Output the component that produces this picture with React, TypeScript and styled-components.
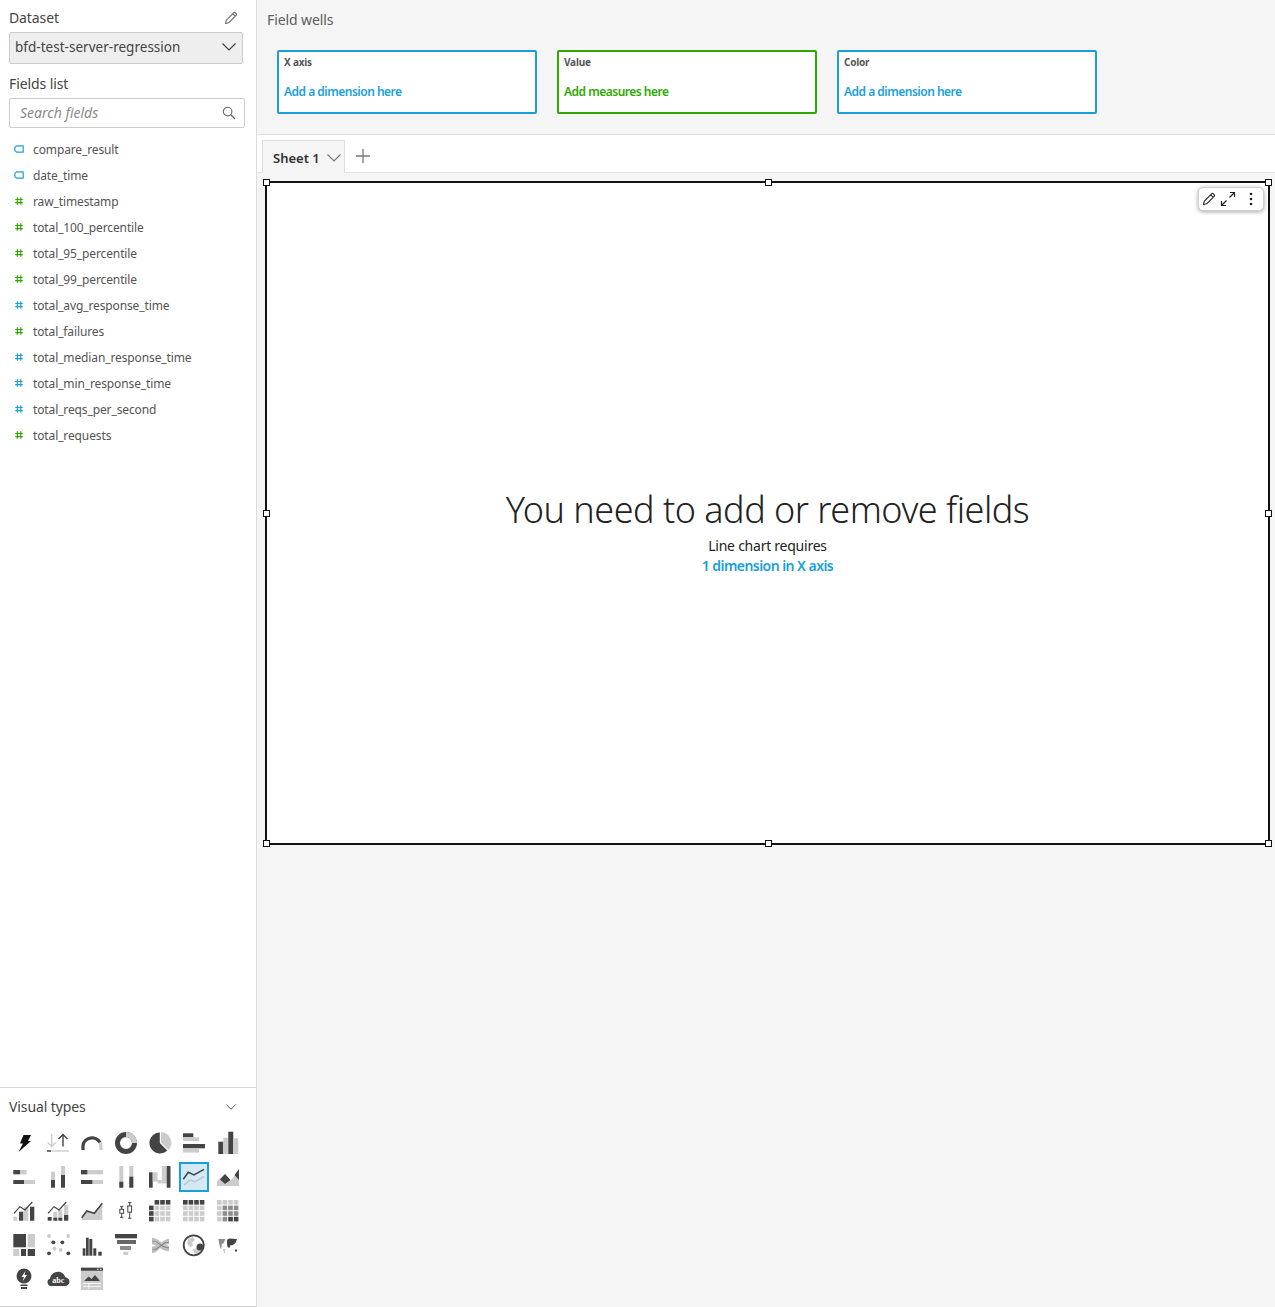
import React from "react";
import styled, { createGlobalStyle } from "styled-components";

const FONT = `"Noto Sans", "Open Sans", "Liberation Sans", sans-serif`;
const D = "#444444";
const M = "#8c8c8c";
const L = "#cccccc";
const BLUE = "#1b9fd9";
const GREEN = "#2fa800";

const Global = createGlobalStyle`
  html, body { margin: 0; padding: 0; background: #f5f5f5; }
  body { font-family: ${FONT}; color: #444; }
  * { box-sizing: border-box; }
`;

const Page = styled.div`
  display: flex;
  width: 1275px;
  height: 1307px;
  overflow: hidden;
`;

const Sidebar = styled.aside`
  flex: 0 0 257px;
  display: flex;
  flex-direction: column;
  background: #fff;
  border-right: 1px solid #dcdcdc;
`;

const SidebarTop = styled.div`
  flex: 1;
  padding: 8px 11px 0 9px;
`;

const LabelRow = styled.div`
  display: flex;
  align-items: center;
  justify-content: space-between;
  height: 20px;
  padding-right: 7px;
`;

const PanelLabel = styled.div`
  font-size: 14px;
  line-height: 20px;
  color: #444;
  letter-spacing: -0.1px;
`;

const DatasetSelect = styled.div`
  display: flex;
  align-items: center;
  justify-content: space-between;
  width: 234px;
  height: 32px;
  margin-top: 4px;
  padding: 0 5px 3px 5px;
  background: #eeeeee;
  border: 1px solid #cccccc;
  border-radius: 2px;
  font-size: 13.5px;
  color: #444;
  letter-spacing: 0.02px;
`;

const FieldsLabel = styled(PanelLabel)`
  margin-top: 10px;
`;

const SearchBox = styled.div`
  display: flex;
  align-items: center;
  justify-content: space-between;
  width: 236px;
  height: 30px;
  margin-top: 4px;
  padding: 0 8px 1px 10px;
  background: #fff;
  border: 1px solid #cccccc;
  border-radius: 2px;
  font-size: 14px;
  font-style: italic;
  color: #8a8a8a;
`;

const FieldList = styled.ul`
  list-style: none;
  margin: 8px 0 0;
  padding: 0;
`;

const FieldRow = styled.li`
  display: flex;
  align-items: center;
  height: 26px;
  padding-left: 5px;
  font-size: 12px;
  color: #545454;
  letter-spacing: -0.12px;
`;

const FieldGlyph = styled.span`
  display: flex;
  width: 19px;
  flex: none;
`;

const VisualPanel = styled.section`
  flex: 0 0 220px;
  border-top: 1px solid #d5d5d5;
  border-bottom: 1px solid #d5d5d5;
  padding: 9px 0 0 8px;
`;

const VisualHead = styled(LabelRow)`
  padding: 0 19px 0 1px;
`;

const VisualGrid = styled.div`
  display: grid;
  grid-template-columns: repeat(7, 34px);
  grid-auto-rows: 34px;
  margin-top: 9px;
`;

const VisualCell = styled.div<{ $selected?: boolean }>`
  position: relative;
  width: 34px;
  height: 34px;
  ${(p) =>
    p.$selected &&
    `&::before {
      content: "";
      position: absolute;
      inset: 2px 3px 2px 1px;
      background: #d3e9f6;
      border: 2px solid ${BLUE};
    }`}
  svg { position: relative; display: block; }
`;

const Main = styled.main`
  flex: 1;
  display: flex;
  flex-direction: column;
  min-width: 0;
`;

const Wells = styled.header`
  flex: 0 0 135px;
  padding: 10px 0 0 10px;
  background: #f5f5f5;
  border-bottom: 1px solid #dcdcdc;
`;

const WellsTitle = styled.div`
  font-size: 14px;
  line-height: 20px;
  color: #5c5c5c;
  letter-spacing: -0.1px;
`;

const WellRow = styled.div`
  display: flex;
  gap: 20px;
  margin: 20px 0 0 10px;
`;

const Well = styled.div<{ $color: string }>`
  width: 260px;
  height: 64px;
  padding: 3px 5px;
  background: #fff;
  border: 2px solid ${(p) => p.$color};
  border-radius: 2px;
`;

const WellLabel = styled.div`
  font-size: 10px;
  line-height: 14px;
  font-weight: 700;
  color: #555;
  letter-spacing: -0.2px;
`;

const WellHint = styled.div<{ $color: string }>`
  margin-top: 15px;
  font-size: 12px;
  line-height: 16px;
  font-weight: 600;
  color: ${(p) => p.$color};
  letter-spacing: -0.5px;
`;

const TabBar = styled.nav`
  flex: 0 0 38px;
  display: flex;
  align-items: flex-end;
  padding-left: 5px;
  background: #fff;
  border-bottom: 1px solid #e2e2e2;
`;

const Tab = styled.div`
  display: flex;
  align-items: center;
  justify-content: space-between;
  width: 83px;
  height: 33px;
  margin-bottom: -1px;
  padding: 1px 2px 0 10px;
  background: #f5f5f5;
  border: 1px solid #dedede;
  border-bottom: 0;
  font-size: 13px;
  font-weight: 600;
  color: #333;
`;

const AddTab = styled.div`
  display: flex;
  margin: 0 0 9px 11px;
`;

const Canvas = styled.div`
  flex: 1;
  padding: 8px 5px 0 8px;
  background: #f5f5f5;
`;

const VisualFrame = styled.div`
  position: relative;
  width: 1005px;
  height: 664px;
  padding-top: 303px;
  background: #fff;
  border: 2px solid #111;
  text-align: center;
`;

const Handle = styled.span<{ $x: "l" | "c" | "r"; $y: "t" | "c" | "b" }>`
  position: absolute;
  width: 7px;
  height: 7px;
  background: #fff;
  border: 1.5px solid #111;
  left: ${(p) => (p.$x === "l" ? "-4px" : p.$x === "c" ? "calc(50% - 3px)" : "auto")};
  right: ${(p) => (p.$x === "r" ? "-4px" : "auto")};
  top: ${(p) => (p.$y === "t" ? "-4px" : p.$y === "c" ? "calc(50% - 3px)" : "auto")};
  bottom: ${(p) => (p.$y === "b" ? "-4px" : "auto")};
`;

const FrameTools = styled.div`
  position: absolute;
  top: 4px;
  right: 4px;
  display: flex;
  align-items: center;
  gap: 4px;
  width: 66px;
  height: 24px;
  padding-left: 3px;
  background: #fff;
  border: 1px solid #cfcfcf;
  border-radius: 5px;
  box-shadow: 0 1px 4px rgba(0, 0, 0, 0.35);
`;

const Message = styled.h2`
  margin: 0;
  font-size: 36px;
  line-height: 48px;
  font-weight: 300;
  color: #222;
  letter-spacing: -0.5px;
`;

const Requires = styled.div`
  margin-top: 2px;
  font-size: 14px;
  line-height: 20px;
  color: #222;
  letter-spacing: -0.25px;
`;

const Requirement = styled.div`
  font-size: 14px;
  line-height: 20px;
  font-weight: 600;
  color: ${BLUE};
  letter-spacing: -0.55px;
`;

const Chevron = ({ size = 16, color = "#444" }: { size?: number; color?: string }) => (
  <svg width={size} height={size} viewBox="0 0 16 16" fill="none">
    <path d="M1.5 4.5 8 11l6.5-6.5" stroke={color} strokeWidth="1.2" />
  </svg>
);

const Pencil = ({ color = "#666" }: { color?: string }) => (
  <svg width="14" height="14" viewBox="0 0 14 14" fill="none">
    <path d="M1.5 12.5l.7-3.2L9.8 1.7a1 1 0 0 1 1.4 0l1.1 1.1a1 1 0 0 1 0 1.4L4.7 11.8z M8.8 2.8l2.4 2.4" stroke={color} strokeWidth="1.1" strokeLinejoin="round" />
  </svg>
);

const Search = () => (
  <svg width="14" height="14" viewBox="0 0 14 14" fill="none">
    <circle cx="5.6" cy="5.6" r="4.3" stroke="#666" strokeWidth="1.1" />
    <path d="M8.8 8.8l4.2 4.2" stroke="#666" strokeWidth="1.3" />
  </svg>
);

const Tag = () => (
  <svg width="10" height="8" viewBox="0 0 10 8" fill="none">
    <path d="M2.8.8h6.4v6.4H2.8L.8 5.6V2.4z" stroke={BLUE} strokeWidth="1.2" strokeLinejoin="round" />
  </svg>
);

const Hash = ({ color }: { color: string }) => (
  <svg width="10" height="10" viewBox="0 0 10 10" fill="none">
    <path d="M3.4 1.2v7.6M6.8 1.2v7.6M1.2 3.5h7.6M1.2 6.6h7.6" stroke={color} strokeWidth="1.2" />
  </svg>
);

const R = ({ x, y, w, h, c = D }: { x: number; y: number; w: number; h: number; c?: string }) => (
  <rect x={x} y={y} width={w} height={h} fill={c} />
);

const Dot = ({ x, y, c }: { x: number; y: number; c: string }) => <circle cx={x} cy={y} r="1.9" fill={c} />;

const Matrix = ({ cells }: { cells: string[] }) => (
  <>
    {cells.flatMap((row, r) =>
      row.split("").map((k, c) =>
        k === "." ? null : (
          <R key={`${r}-${c}`} x={5 + c * 5.6} y={6 + r * 5.6} w={4.6} h={4.6} c={k === "d" ? D : k === "m" ? M : L} />
        )
      )
    )}
  </>
);

const ICONS: React.ReactNode[] = [
  <path d="M15.5 9h7.5l-3 6h3L10.5 26l4.5-8.5h-3z" fill="#111" />,
  <>
    <path d="M9.7 8v12.5M5.7 16.5l4 4 4-4" stroke={L} strokeWidth="1.4" fill="none" />
    <path d="M21 20.5V8.5M16.5 13l4.5-4.5 4.5 4.5" stroke={D} strokeWidth="1.4" fill="none" />
    <R x={5} y={24.3} w={22} h={1.4} c={L} />
    <R x={5} y={24.3} w={4} h={1.4} />
  </>,
  <>
    <path d="M7 24v-4a9 8.5 0 0 1 17-3.5" stroke={D} strokeWidth="3.2" fill="none" />
    <path d="M24 16.5a9 9 0 0 1 1 3.5v4" stroke={L} strokeWidth="3.2" fill="none" />
  </>,
  <>
    <circle cx="16" cy="17" r="8.5" stroke={D} strokeWidth="5" fill="none" />
    <path d="M16 8.5a8.5 8.5 0 0 1 8.5 8.5" stroke={L} strokeWidth="5" fill="none" />
  </>,
  <>
    <path d="M15.8 17V6.5a10.5 10.5 0 1 0 7.5 18z" fill={D} />
    <path d="M17 6.3a10.5 10.5 0 0 1 7.5 17.7L17 16.5z" fill={L} />
  </>,
  <>
    <R x={5} y={7.3} w={10.3} h={4} />
    <R x={5} y={11.3} w={16} h={3.7} c={L} />
    <R x={5} y={18} w={22} h={4.3} />
    <R x={5} y={22.3} w={16} h={4.3} c={L} />
  </>,
  <>
    <R x={6.3} y={15.7} w={5} h={12.3} />
    <R x={11.3} y={11.7} w={5} h={16.3} c={L} />
    <R x={16.3} y={5.7} w={5} h={22.3} />
    <R x={21.3} y={12.3} w={5} h={15.7} c={L} />
  </>,
  <>
    <R x={5.3} y={10} w={6.7} h={4.3} />
    <R x={12} y={10} w={6.7} h={4.3} c={L} />
    <R x={5.3} y={20} w={11} h={4} />
    <R x={16.3} y={20} w={10.7} h={4} c={L} />
  </>,
  <>
    <R x={9} y={11.7} w={4} h={8.3} c={L} />
    <R x={9} y={20} w={4} h={7.7} />
    <R x={19} y={6} w={4} h={9} c={L} />
    <R x={19} y={15} w={4} h={12.7} />
  </>,
  <>
    <R x={5} y={10} w={22} h={4.3} c={L} />
    <R x={5} y={10} w={6.3} h={4.3} />
    <R x={5} y={20} w={22} h={4} c={L} />
    <R x={5} y={20} w={11.3} h={4} />
  </>,
  <>
    <R x={9.3} y={6} w={4} h={21.7} c={L} />
    <R x={9.3} y={21.7} w={4} h={6} />
    <R x={19.3} y={6} w={4} h={21.7} c={L} />
    <R x={19.3} y={16.7} w={4} h={11} />
  </>,
  <>
    <R x={5} y={12.3} w={3.7} h={15.4} />
    <R x={8.7} y={12.3} w={4.8} h={9.4} c={L} />
    <R x={13.5} y={20} w={4.3} h={3.5} c={L} />
    <R x={17.8} y={6} w={4.9} h={17.5} c={L} />
    <R x={22.7} y={6} w={3.8} h={21.7} />
  </>,
  <>
    <path d="M6 25l6-5 5 1.7 9-5" stroke="#c4c4c4" strokeWidth="1.4" fill="none" />
    <path d="M5.3 19.3l5-7 5.7 2.7 10-5.700" stroke={D} strokeWidth="1.5" fill="none" />
  </>,
  <>
    <path d="M5 21l8-7 6 6.5 8-11.5v17H5z" fill={L} />
    <path d="M13 14l5.5 6-5.5 4-5-4.5zM27 9l-4.5 6 4.5 5z" fill={D} />
  </>,
  <>
    <R x={5.3} y={22.7} w={4} h={4} c={L} />
    <R x={11} y={17.7} w={4.3} h={9} />
    <R x={16} y={12.7} w={4.3} h={14} c={L} />
    <R x={22} y={12.7} w={4.3} h={14} />
    <path d="M6 19.3l6-6.6 5 3.3 7.3-8" stroke={D} strokeWidth="1.2" fill="none" />
  </>,
  <>
    <R x={5.7} y={23} w={4} h={3.7} />
    <R x={11.3} y={18} w={4} h={5.7} c={L} />
    <R x={11.3} y={23.7} w={4} h={3} />
    <R x={16.3} y={16} w={4} h={7.7} c={L} />
    <R x={16.3} y={23.7} w={4} h={3} />
    <R x={22} y={11} w={4.3} h={10} c={L} />
    <R x={22} y={21} w={4.3} h={5.7} />
    <path d="M6 19.3l6-6.6 5 3.3 7.3-8" stroke={D} strokeWidth="1.2" fill="none" />
  </>,
  <>
    <path d="M5.7 26v-2.3l5-6.7 7.6 2.3 8-10V26z" fill={L} />
    <path d="M5.7 23.7l5-6.7 7.6 2.3 8-10" stroke={D} strokeWidth="1.6" fill="none" />
  </>,
  <>
    <path d="M11.7 12.7v10.6M19.7 8.7v15.6M10 12.7h3.4M10 23.3h3.4M18 8.7h3.4M18 24.3h3.4" stroke={D} strokeWidth="1" />
    <rect x="9.8" y="15.3" width="3.8" height="4" fill="#fff" stroke={D} strokeWidth="1" />
    <rect x="17.8" y="11.9" width="3.8" height="6.2" fill="#fff" stroke={D} strokeWidth="1" />
  </>,
  <Matrix cells={[".ddd", "dlll", "dlll", "dlll"]} />,
  <Matrix cells={["dddd", "llll", "llll", "llll"]} />,
  <Matrix cells={["llll", "lmmm", "lmmm", "lmdd"]} />,
  <>
    <R x={5.3} y={6} w={12.7} h={13.3} />
    <R x={19.7} y={6} w={7.3} h={13.3} c={L} />
    <R x={5.3} y={21} w={6} h={7} c={L} />
    <R x={13} y={21} w={5} h={7} />
    <R x={19.7} y={21} w={7.3} h={7} />
  </>,
  <>
    <Dot x={7} y={8} c={L} />
    <Dot x={26.3} y={8} c={L} />
    <Dot x={11.3} y={14.3} c={D} />
    <Dot x={20.3} y={14.3} c={D} />
    <Dot x={12.5} y={20.5} c={L} />
    <Dot x={18.7} y={22} c={L} />
    <Dot x={7} y={25.3} c={D} />
    <Dot x={26.3} y={25.3} c={D} />
  </>,
  <>
    <R x={6.7} y={20.3} w={2.7} h={7.4} />
    <R x={10} y={9.7} w={2.7} h={18} />
    <R x={13.3} y={11} w={3} h={16.7} />
    <R x={17.3} y={20.3} w={3} h={7.4} />
    <R x={22.3} y={23.7} w={3.4} h={4} />
  </>,
  <>
    <R x={5} y={6} w={22} h={4.3} />
    <R x={7} y={12} w={19} h={4} c="#666" />
    <R x={10} y={18} w={11} h={4} c={M} />
    <R x={13.3} y={23.7} w={5} h={3.3} c={L} />
  </>,
  <>
    <path d="M8 11c6 0 10 8 17 8M8 15c6 0 10 7 17 7M8 24c7 0 9-12 17-12M8 20c7 0 10-5 17-5" stroke="#bdbdbd" strokeWidth="2.6" fill="none" />
    <path d="M8 22c7 0 10-8 17-8M8 13c6 0 10 7 17 7" stroke="#777" strokeWidth="1" fill="none" />
  </>,
  <>
    <path d="M10 11l5-2 2 3-3 3 1 3-3 1-3-3zM15 21l5-1 3 1-3 6-4-2z" fill={L} />
    <circle cx="22" cy="19" r="3.5" fill={D} />
    <circle cx="15.7" cy="17.3" r="10" stroke={D} strokeWidth="1.8" fill="none" />
  </>,
  <>
    <path d="M6.3 11h7l-1.5 4-2 1-.5 5-1-1-1-4z" fill={M} />
    <path d="M11 21h2.5l-.5 4h-1z" fill={L} />
    <path d="M15 12l2-1.5 8 .5-1.5 4-2 1.500-1.500 1-1.500-.5-1 3-2-1-.5-4zM23 21.500h2v2h-2z" fill={D} />
  </>,
  <>
    <circle cx="16" cy="14" r="7.5" fill={D} />
    <path d="M17.5 9l-4 6H16l-1.500 4.500 4.500-6.500h-2.500z" fill="#fff" />
    <R x={12.5} y={22.5} w={7} h={1.5} />
    <R x={13} y={25} w={6} h={2} />
  </>,
  <>
    <path d="M9 24a3.700 3.700 0 0 1-1-7.200c.5-4 4-7 8-7s6.500 2.500 7.300 5.500a4.300 4.300 0 0 1-.3 8.700z" fill={D} />
    <text x="16.3" y="21" fontSize="8" fontWeight="700" fontFamily="Liberation Serif, serif" fill="#fff" textAnchor="middle">abc</text>
  </>,
  <>
    <R x={5} y={5.7} w={22} h={22.3} c={L} />
    <R x={5} y={5.7} w={22} h={3} />
    <R x={21} y={6.7} w={1.5} h={1} c="#fff" />
    <R x={24} y={6.7} w={1.5} h={1} c="#fff" />
    <path d="M8 19l4.500-4.500 3 2.500 3.500-4 5 6z" fill={D} />
    <R x={7} y={21} w={18} h={0.8} c="#fff" />
    <R x={7} y={24} w={18} h={0.8} c="#fff" />
    <R x={12.5} y={21} w={0.8} h={6} c="#fff" />
  </>,
];

const FIELDS: { name: string; kind: "tag" | "green" | "blue" }[] = [
  { name: "compare_result", kind: "tag" },
  { name: "date_time", kind: "tag" },
  { name: "raw_timestamp", kind: "green" },
  { name: "total_100_percentile", kind: "green" },
  { name: "total_95_percentile", kind: "green" },
  { name: "total_99_percentile", kind: "green" },
  { name: "total_avg_response_time", kind: "blue" },
  { name: "total_failures", kind: "green" },
  { name: "total_median_response_time", kind: "blue" },
  { name: "total_min_response_time", kind: "blue" },
  { name: "total_reqs_per_second", kind: "blue" },
  { name: "total_requests", kind: "green" },
];

const WELLS = [
  { label: "X axis", hint: "Add a dimension here", color: BLUE },
  { label: "Value", hint: "Add measures here", color: GREEN },
  { label: "Color", hint: "Add a dimension here", color: BLUE },
];

const HANDLES: { x: "l" | "c" | "r"; y: "t" | "c" | "b" }[] = [
  { x: "l", y: "t" },
  { x: "c", y: "t" },
  { x: "r", y: "t" },
  { x: "l", y: "c" },
  { x: "r", y: "c" },
  { x: "l", y: "b" },
  { x: "c", y: "b" },
  { x: "r", y: "b" },
];

export default function App() {
  return (
    <Page>
      <Global />
      <Sidebar>
        <SidebarTop>
          <LabelRow>
            <PanelLabel>Dataset</PanelLabel>
            <Pencil />
          </LabelRow>
          <DatasetSelect>
            bfd-test-server-regression
            <Chevron />
          </DatasetSelect>
          <FieldsLabel>Fields list</FieldsLabel>
          <SearchBox>
            Search fields
            <Search />
          </SearchBox>
          <FieldList>
            {FIELDS.map((f) => (
              <FieldRow key={f.name}>
                <FieldGlyph>
                  {f.kind === "tag" ? <Tag /> : <Hash color={f.kind === "green" ? GREEN : BLUE} />}
                </FieldGlyph>
                {f.name}
              </FieldRow>
            ))}
          </FieldList>
        </SidebarTop>
        <VisualPanel>
          <VisualHead>
            <PanelLabel>Visual types</PanelLabel>
            <Chevron size={12} />
          </VisualHead>
          <VisualGrid>
            {ICONS.map((icon, i) => (
              <VisualCell key={i} $selected={i === 12}>
                <svg width="34" height="34" viewBox="0 0 34 34">
                  {icon}
                </svg>
              </VisualCell>
            ))}
          </VisualGrid>
        </VisualPanel>
      </Sidebar>
      <Main>
        <Wells>
          <WellsTitle>Field wells</WellsTitle>
          <WellRow>
            {WELLS.map((w) => (
              <Well key={w.label} $color={w.color}>
                <WellLabel>{w.label}</WellLabel>
                <WellHint $color={w.color}>{w.hint}</WellHint>
              </Well>
            ))}
          </WellRow>
        </Wells>
        <TabBar>
          <Tab>
            Sheet 1
            <Chevron color="#777" />
          </Tab>
          <AddTab>
            <svg width="14" height="14" viewBox="0 0 14 14" fill="none">
              <path d="M7 0v14M0 7h14" stroke="#777" strokeWidth="1.3" />
            </svg>
          </AddTab>
        </TabBar>
        <Canvas>
          <VisualFrame>
            {HANDLES.map((h) => (
              <Handle key={h.x + h.y} $x={h.x} $y={h.y} />
            ))}
            <FrameTools>
              <Pencil color="#222" />
              <svg width="16" height="16" viewBox="0 0 16 16" fill="none">
                <path d="M1.5 14.5L6.5 9.5M1.5 10v4.5H6M14.5 1.5L9.5 6.5M10 1.5h4.500V6" stroke="#222" strokeWidth="1.2" />
              </svg>
              <svg width="16" height="16" viewBox="0 0 16 16" fill="#222">
                <circle cx="11" cy="3" r="1.3" />
                <circle cx="11" cy="8" r="1.3" />
                <circle cx="11" cy="13" r="1.3" />
              </svg>
            </FrameTools>
            <Message>You need to add or remove fields</Message>
            <Requires>Line chart requires</Requires>
            <Requirement>1 dimension in X axis</Requirement>
          </VisualFrame>
        </Canvas>
      </Main>
    </Page>
  );
}
